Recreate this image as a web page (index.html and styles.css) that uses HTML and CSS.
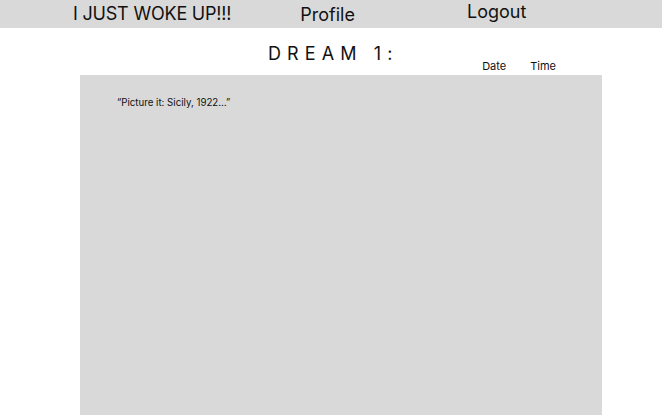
FILE: index.html
```html
<!DOCTYPE html>
<html>
<head>
<meta charset="utf-8">
<link rel="stylesheet" href="styles.css">
</head>
<body>
<header class="topbar">
  <span class="nav-item nav-brand">I JUST WOKE UP!!!</span>
  <span class="nav-item nav-profile">Profile</span>
  <span class="nav-item nav-logout">Logout</span>
</header>
<main class="page">
  <div class="title-row">
    <h1 class="title">DREAM 1:</h1>
    <div class="meta">
      <span class="meta-date">Date</span>
      <span class="meta-time">Time</span>
    </div>
  </div>
  <section class="dream-box">
    <p class="dream-text">“Picture it: Sicily, 1922…”</p>
  </section>
</main>
</body>
</html>
```
FILE: styles.css
```css
* { box-sizing: border-box; }
html, body {
  margin: 0;
  padding: 0;
  background: #ffffff;
  font-family: Inter, "Noto Sans", sans-serif;
  color: #111111;
  overflow: hidden;
  height: 415px;
}
.topbar {
  height: 28px;
  background: #d9d9d9;
  display: flex;
  align-items: flex-start;
  padding-left: 73px;
}
.nav-item {
  font-size: 18px;
  line-height: 22px;
  white-space: nowrap;
}
.nav-brand {
  padding-top: 3px;
  letter-spacing: -0.2px;
}
.nav-profile {
  margin-left: 69px;
  padding-top: 4px;
}
.nav-logout {
  margin-left: 112px;
  padding-top: 1px;
}
.page {
  padding: 0 60px 0 80px;
}
.title-row {
  display: flex;
  align-items: flex-end;
  height: 47px;
  padding-bottom: 2px;
}
.title {
  margin: 0 0 0 188px;
  font-size: 18px;
  font-weight: 400;
  line-height: 22px;
  letter-spacing: 0.34em;
  align-self: flex-start;
  margin-top: 15px;
}
.meta {
  margin-left: auto;
  margin-right: 46px;
  display: flex;
  gap: 24px;
  font-size: 11px;
  line-height: 13px;
}
.dream-box {
  background: #d9d9d9;
  height: 340px;
  padding: 22px 0 0 37px;
}
.dream-text {
  margin: 0;
  font-size: 9.7px;
  line-height: 12px;
}
```
